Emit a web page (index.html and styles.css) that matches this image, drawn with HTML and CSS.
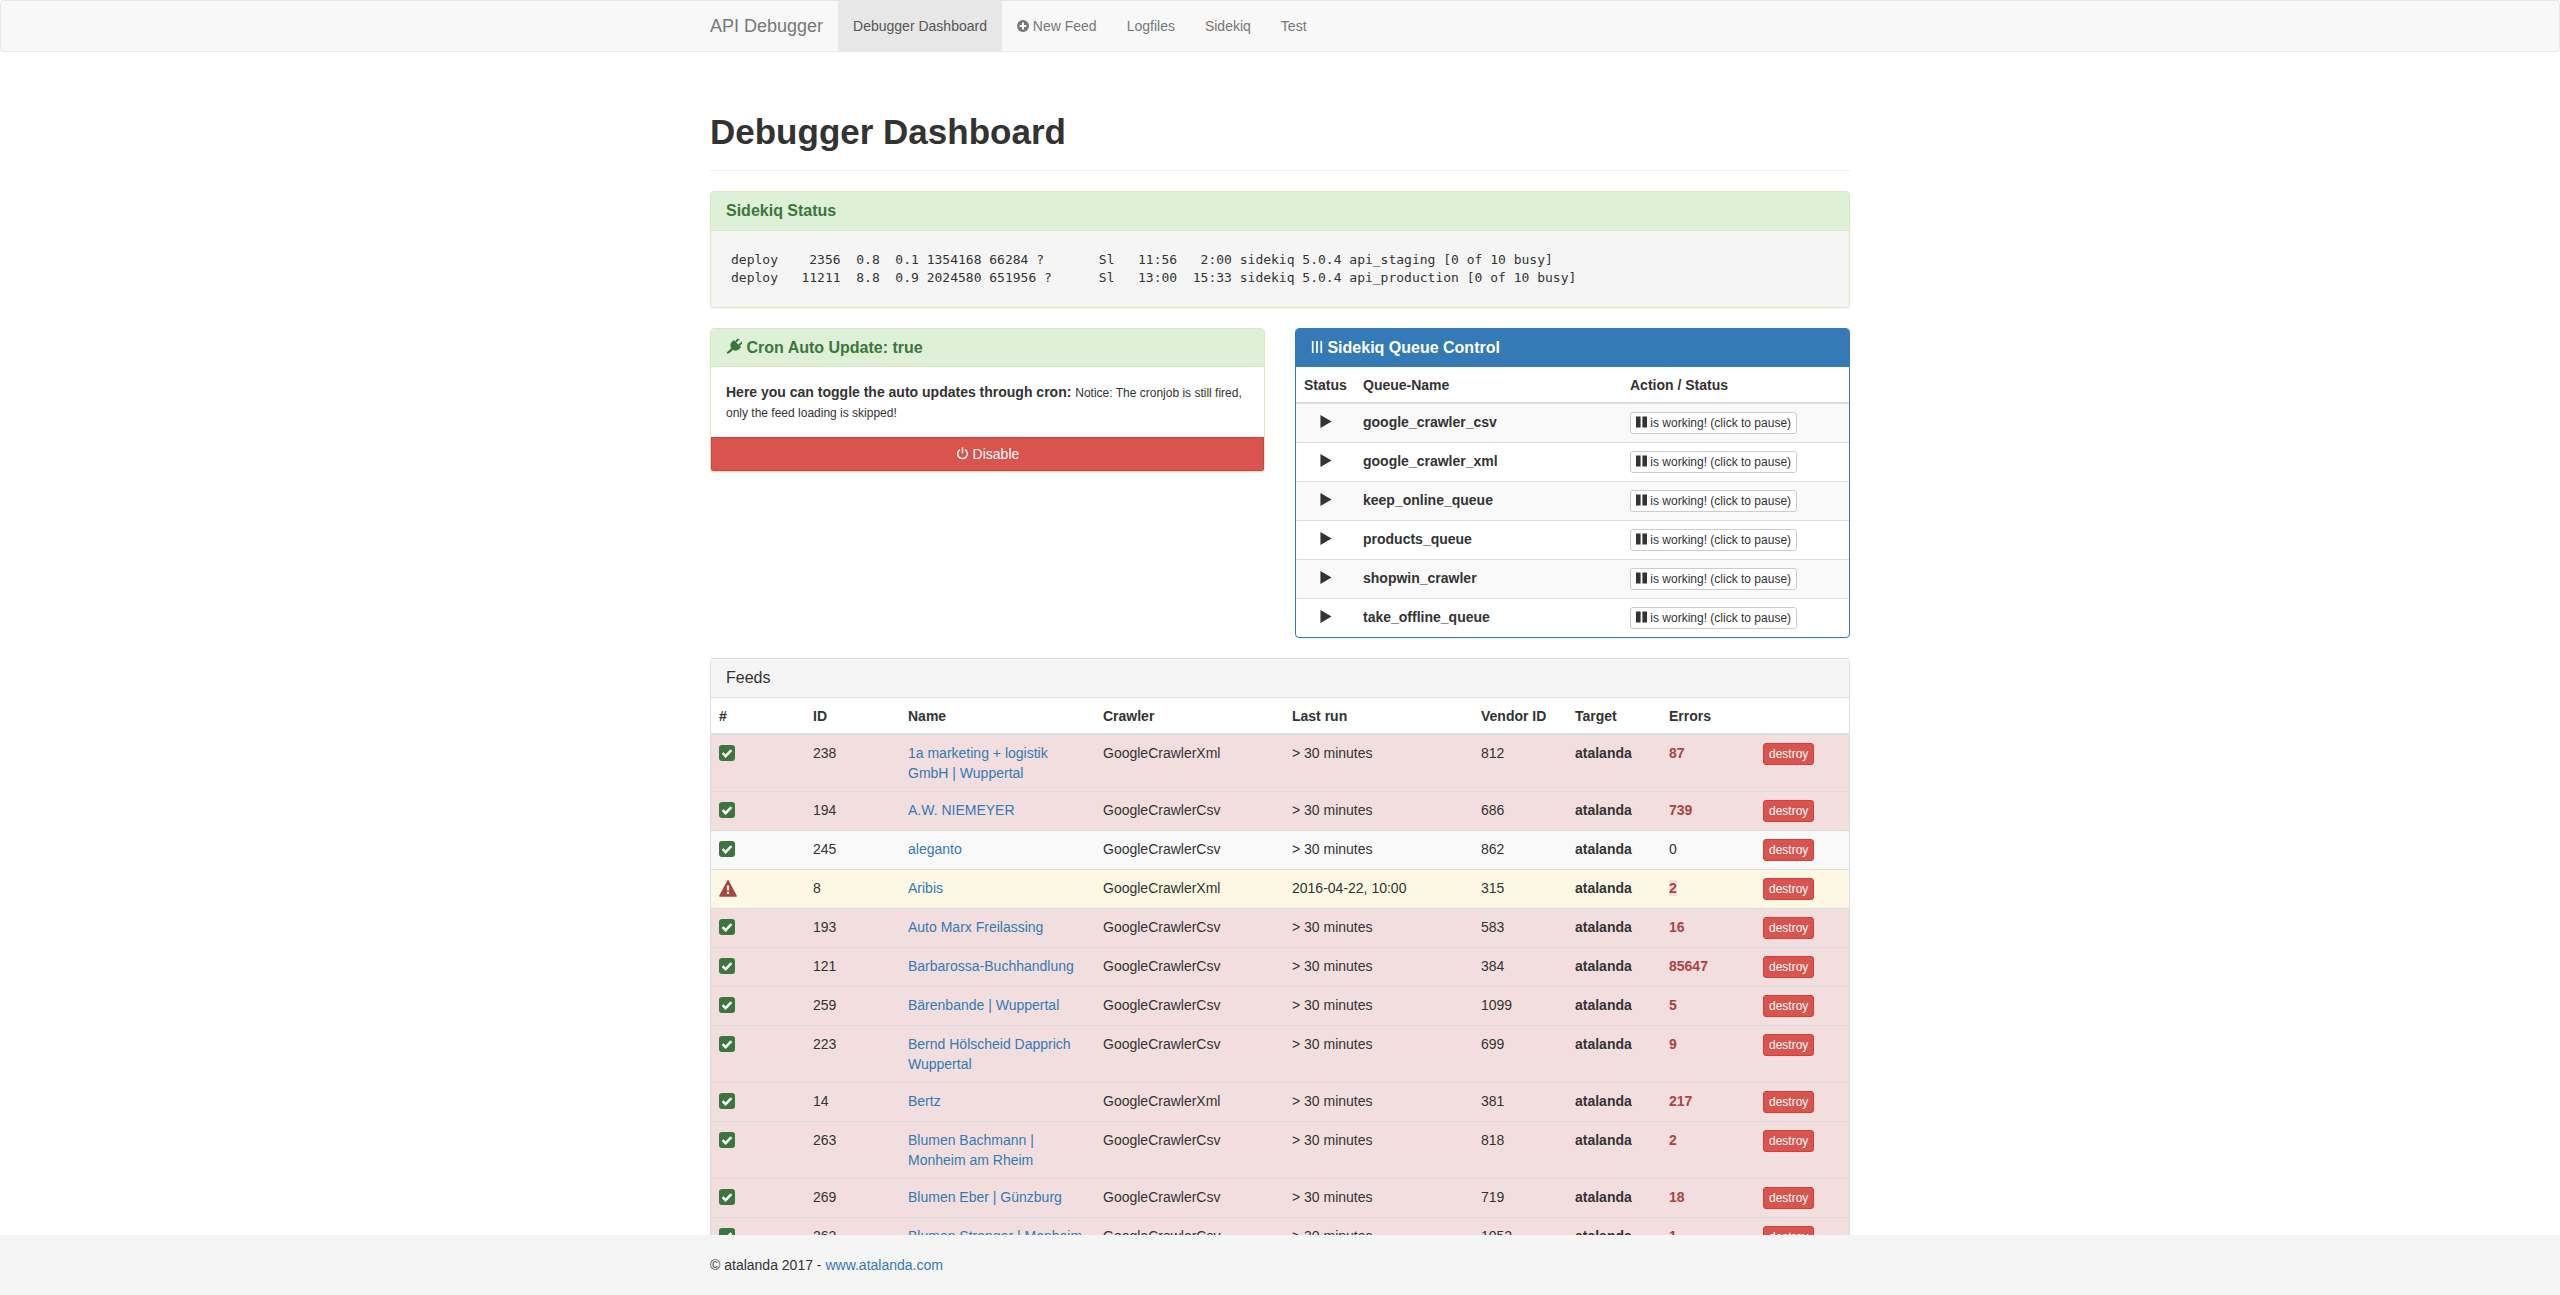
FILE: index.html
```html
<!DOCTYPE html>
<html>
<head>
  <title>API Debugger</title>
  <link rel="stylesheet" href="styles.css">
</head>
<body>
  <nav class="navbar">
    <div class="container nav-inner">
      <a class="brand" href="#">API Debugger</a>
      <a class="nav-link active" href="#">Debugger Dashboard</a>
      <a class="nav-link" href="#"><svg class="icon-plus" viewBox="0 0 12 12"><circle cx="6" cy="6" r="6" fill="#777"/><path d="M6 2.6v6.8M2.6 6h6.8" stroke="#f8f8f8" stroke-width="2"/></svg> New Feed</a>
      <a class="nav-link" href="#">Logfiles</a>
      <a class="nav-link" href="#">Sidekiq</a>
      <a class="nav-link" href="#">Test</a>
    </div>
  </nav>

  <div class="container">
    <div class="page-header"><h1>Debugger Dashboard</h1></div>

    <div class="panel panel-success">
      <div class="panel-heading"><h3 class="panel-title">Sidekiq Status</h3></div>
      <pre class="status-output">deploy    2356  0.8  0.1 1354168 66284 ?       Sl   11:56   2:00 sidekiq 5.0.4 api_staging [0 of 10 busy]
deploy   11211  8.8  0.9 2024580 651956 ?      Sl   13:00  15:33 sidekiq 5.0.4 api_production [0 of 10 busy]</pre>
    </div>

    <div class="row">
      <div class="col">
        <div class="panel panel-success">
          <div class="panel-heading">
            <h3 class="panel-title"><svg class="icon-plug" viewBox="0 0 16 16"><g transform="rotate(45 8 8)" fill="#3c763d"><rect x="4.6" y="-1.6" width="2" height="5" rx=".6"/><rect x="9.4" y="-1.6" width="2" height="5" rx=".6"/><path d="M2.8 3.2h10.4v2.6c0 2.7-1.8 4.6-4 5V13c0 1.6-.4 3-1.2 4.4H6.8V10.8c-2.2-.4-4-2.3-4-5z"/></g></svg> Cron Auto Update: true</h3>
          </div>
          <div class="panel-body">
            <strong>Here you can toggle the auto updates through cron:</strong> <small>Notice: The cronjob is still fired, only the feed loading is skipped!</small>
          </div>
          <a class="btn btn-danger btn-block" href="#"><svg class="icon-power" viewBox="0 0 14 14"><path d="M4.2 2.9a5.2 5.2 0 1 0 5.6 0" fill="none" stroke="#fff" stroke-width="1.6"/><path d="M7 .6v6" stroke="#fff" stroke-width="1.6"/></svg> Disable</a>
        </div>
      </div>

      <div class="col">
        <div class="panel panel-primary">
          <div class="panel-heading">
            <h3 class="panel-title"><svg class="icon-bars" viewBox="0 0 14 16"><path d="M1 1h2v14H1zM6 1h2v14H6zM11 1h2v14h-2z" fill="#fff"/></svg> Sidekiq Queue Control</h3>
          </div>
          <table class="table queue-table">
            <colgroup><col class="q-status"><col class="q-name"><col class="q-action"></colgroup>
            <thead>
              <tr><th>Status</th><th>Queue-Name</th><th>Action / Status</th></tr>
            </thead>
            <tbody>
              <tr>
                <td class="center"><svg class="icon-play" viewBox="0 0 12 14"><path d="M0 0l12 7-12 7z"/></svg></td>
                <td><strong>google_crawler_csv</strong></td>
                <td><a class="btn btn-default btn-xs" href="#"><svg class="icon-pause" viewBox="0 0 12 12"><path d="M0 0h5v12H0zM7 0h5v12H7z"/></svg> is working! (click to pause)</a></td>
              </tr>
              <tr>
                <td class="center"><svg class="icon-play" viewBox="0 0 12 14"><path d="M0 0l12 7-12 7z"/></svg></td>
                <td><strong>google_crawler_xml</strong></td>
                <td><a class="btn btn-default btn-xs" href="#"><svg class="icon-pause" viewBox="0 0 12 12"><path d="M0 0h5v12H0zM7 0h5v12H7z"/></svg> is working! (click to pause)</a></td>
              </tr>
              <tr>
                <td class="center"><svg class="icon-play" viewBox="0 0 12 14"><path d="M0 0l12 7-12 7z"/></svg></td>
                <td><strong>keep_online_queue</strong></td>
                <td><a class="btn btn-default btn-xs" href="#"><svg class="icon-pause" viewBox="0 0 12 12"><path d="M0 0h5v12H0zM7 0h5v12H7z"/></svg> is working! (click to pause)</a></td>
              </tr>
              <tr>
                <td class="center"><svg class="icon-play" viewBox="0 0 12 14"><path d="M0 0l12 7-12 7z"/></svg></td>
                <td><strong>products_queue</strong></td>
                <td><a class="btn btn-default btn-xs" href="#"><svg class="icon-pause" viewBox="0 0 12 12"><path d="M0 0h5v12H0zM7 0h5v12H7z"/></svg> is working! (click to pause)</a></td>
              </tr>
              <tr>
                <td class="center"><svg class="icon-play" viewBox="0 0 12 14"><path d="M0 0l12 7-12 7z"/></svg></td>
                <td><strong>shopwin_crawler</strong></td>
                <td><a class="btn btn-default btn-xs" href="#"><svg class="icon-pause" viewBox="0 0 12 12"><path d="M0 0h5v12H0zM7 0h5v12H7z"/></svg> is working! (click to pause)</a></td>
              </tr>
              <tr>
                <td class="center"><svg class="icon-play" viewBox="0 0 12 14"><path d="M0 0l12 7-12 7z"/></svg></td>
                <td><strong>take_offline_queue</strong></td>
                <td><a class="btn btn-default btn-xs" href="#"><svg class="icon-pause" viewBox="0 0 12 12"><path d="M0 0h5v12H0zM7 0h5v12H7z"/></svg> is working! (click to pause)</a></td>
              </tr>
            </tbody>
          </table>
        </div>
      </div>
    </div>

    <div class="panel panel-default">
      <div class="panel-heading"><h3 class="panel-title feeds-title">Feeds</h3></div>
      <table class="table feeds-table">
        <colgroup><col class="f-1"><col class="f-2"><col class="f-name"><col class="f-wide"><col class="f-wide"><col class="f-1"><col class="f-1"><col class="f-1"><col class="f-1"></colgroup>
        <thead>
          <tr><th>#</th><th>ID</th><th>Name</th><th>Crawler</th><th>Last run</th><th>Vendor ID</th><th>Target</th><th>Errors</th><th></th></tr>
        </thead>
        <tbody>
          <tr class="danger">
            <td><svg class="icon-check" viewBox="0 0 16 16"><rect width="16" height="16" rx="3" fill="#3c763d"/><path d="M3.6 8.2l3 3 5.8-6" fill="none" stroke="#fff" stroke-width="2.4"/></svg></td>
            <td>238</td><td><a href="#">1a marketing + logistik GmbH | Wuppertal</a></td><td>GoogleCrawlerXml</td><td>&gt; 30 minutes</td><td>812</td><td><strong>atalanda</strong></td><td><span class="errors">87</span></td><td><a class="btn btn-danger btn-xs" href="#">destroy</a></td>
          </tr>
          <tr class="danger">
            <td><svg class="icon-check" viewBox="0 0 16 16"><rect width="16" height="16" rx="3" fill="#3c763d"/><path d="M3.6 8.2l3 3 5.8-6" fill="none" stroke="#fff" stroke-width="2.4"/></svg></td>
            <td>194</td><td><a href="#">A.W. NIEMEYER</a></td><td>GoogleCrawlerCsv</td><td>&gt; 30 minutes</td><td>686</td><td><strong>atalanda</strong></td><td><span class="errors">739</span></td><td><a class="btn btn-danger btn-xs" href="#">destroy</a></td>
          </tr>
          <tr class="striped">
            <td><svg class="icon-check" viewBox="0 0 16 16"><rect width="16" height="16" rx="3" fill="#3c763d"/><path d="M3.6 8.2l3 3 5.8-6" fill="none" stroke="#fff" stroke-width="2.4"/></svg></td>
            <td>245</td><td><a href="#">aleganto</a></td><td>GoogleCrawlerCsv</td><td>&gt; 30 minutes</td><td>862</td><td><strong>atalanda</strong></td><td>0</td><td><a class="btn btn-danger btn-xs" href="#">destroy</a></td>
          </tr>
          <tr class="warning">
            <td><svg class="icon-warn" viewBox="0 0 18 17"><path d="M9 1L17 16H1z" fill="#a94442" stroke="#a94442" stroke-width="1.6" stroke-linejoin="round"/><path d="M9 5.4v5.2M9 11.8v2.2" stroke="#fcf8e3" stroke-width="2.2"/></svg></td>
            <td>8</td><td><a href="#">Aribis</a></td><td>GoogleCrawlerXml</td><td>2016-04-22, 10:00</td><td>315</td><td><strong>atalanda</strong></td><td><span class="errors">2</span></td><td><a class="btn btn-danger btn-xs" href="#">destroy</a></td>
          </tr>
          <tr class="danger">
            <td><svg class="icon-check" viewBox="0 0 16 16"><rect width="16" height="16" rx="3" fill="#3c763d"/><path d="M3.6 8.2l3 3 5.8-6" fill="none" stroke="#fff" stroke-width="2.4"/></svg></td>
            <td>193</td><td><a href="#">Auto Marx Freilassing</a></td><td>GoogleCrawlerCsv</td><td>&gt; 30 minutes</td><td>583</td><td><strong>atalanda</strong></td><td><span class="errors">16</span></td><td><a class="btn btn-danger btn-xs" href="#">destroy</a></td>
          </tr>
          <tr class="danger">
            <td><svg class="icon-check" viewBox="0 0 16 16"><rect width="16" height="16" rx="3" fill="#3c763d"/><path d="M3.6 8.2l3 3 5.8-6" fill="none" stroke="#fff" stroke-width="2.4"/></svg></td>
            <td>121</td><td><a href="#">Barbarossa-Buchhandlung</a></td><td>GoogleCrawlerCsv</td><td>&gt; 30 minutes</td><td>384</td><td><strong>atalanda</strong></td><td><span class="errors">85647</span></td><td><a class="btn btn-danger btn-xs" href="#">destroy</a></td>
          </tr>
          <tr class="danger">
            <td><svg class="icon-check" viewBox="0 0 16 16"><rect width="16" height="16" rx="3" fill="#3c763d"/><path d="M3.6 8.2l3 3 5.8-6" fill="none" stroke="#fff" stroke-width="2.4"/></svg></td>
            <td>259</td><td><a href="#">Bärenbande | Wuppertal</a></td><td>GoogleCrawlerCsv</td><td>&gt; 30 minutes</td><td>1099</td><td><strong>atalanda</strong></td><td><span class="errors">5</span></td><td><a class="btn btn-danger btn-xs" href="#">destroy</a></td>
          </tr>
          <tr class="danger">
            <td><svg class="icon-check" viewBox="0 0 16 16"><rect width="16" height="16" rx="3" fill="#3c763d"/><path d="M3.6 8.2l3 3 5.8-6" fill="none" stroke="#fff" stroke-width="2.4"/></svg></td>
            <td>223</td><td><a href="#">Bernd Hölscheid Dapprich Wuppertal</a></td><td>GoogleCrawlerCsv</td><td>&gt; 30 minutes</td><td>699</td><td><strong>atalanda</strong></td><td><span class="errors">9</span></td><td><a class="btn btn-danger btn-xs" href="#">destroy</a></td>
          </tr>
          <tr class="danger">
            <td><svg class="icon-check" viewBox="0 0 16 16"><rect width="16" height="16" rx="3" fill="#3c763d"/><path d="M3.6 8.2l3 3 5.8-6" fill="none" stroke="#fff" stroke-width="2.4"/></svg></td>
            <td>14</td><td><a href="#">Bertz</a></td><td>GoogleCrawlerXml</td><td>&gt; 30 minutes</td><td>381</td><td><strong>atalanda</strong></td><td><span class="errors">217</span></td><td><a class="btn btn-danger btn-xs" href="#">destroy</a></td>
          </tr>
          <tr class="danger">
            <td><svg class="icon-check" viewBox="0 0 16 16"><rect width="16" height="16" rx="3" fill="#3c763d"/><path d="M3.6 8.2l3 3 5.8-6" fill="none" stroke="#fff" stroke-width="2.4"/></svg></td>
            <td>263</td><td><a href="#">Blumen Bachmann | Monheim am Rheim</a></td><td>GoogleCrawlerCsv</td><td>&gt; 30 minutes</td><td>818</td><td><strong>atalanda</strong></td><td><span class="errors">2</span></td><td><a class="btn btn-danger btn-xs" href="#">destroy</a></td>
          </tr>
          <tr class="danger">
            <td><svg class="icon-check" viewBox="0 0 16 16"><rect width="16" height="16" rx="3" fill="#3c763d"/><path d="M3.6 8.2l3 3 5.8-6" fill="none" stroke="#fff" stroke-width="2.4"/></svg></td>
            <td>269</td><td><a href="#">Blumen Eber | Günzburg</a></td><td>GoogleCrawlerCsv</td><td>&gt; 30 minutes</td><td>719</td><td><strong>atalanda</strong></td><td><span class="errors">18</span></td><td><a class="btn btn-danger btn-xs" href="#">destroy</a></td>
          </tr>
          <tr class="danger">
            <td><svg class="icon-check" viewBox="0 0 16 16"><rect width="16" height="16" rx="3" fill="#3c763d"/><path d="M3.6 8.2l3 3 5.8-6" fill="none" stroke="#fff" stroke-width="2.4"/></svg></td>
            <td>262</td><td><a href="#">Blumen Stranger | Monheim am Rhein</a></td><td>GoogleCrawlerCsv</td><td>&gt; 30 minutes</td><td>1052</td><td><strong>atalanda</strong></td><td><span class="errors">1</span></td><td><a class="btn btn-danger btn-xs" href="#">destroy</a></td>
          </tr>
        </tbody>
      </table>
    </div>
  </div>

  <footer class="footer">
    <div class="container">© atalanda 2017 - <a href="#">www.atalanda.com</a></div>
  </footer>
</body>
</html>
```

FILE: styles.css
```css
html, body {
  height: 100%;
  overflow: hidden;
}

body {
  margin: 0;
  font-family: "Liberation Sans", Arial, sans-serif;
  font-size: 14px;
  line-height: 20px;
  color: #333;
  background-color: #fff;
}

a {
  color: #337ab7;
  text-decoration: none;
}

.container {
  width: 1140px;
  margin: 0 auto;
}

/* Navbar */
.navbar {
  height: 50px;
  background-color: #f8f8f8;
  border: 1px solid #e7e7e7;
  border-radius: 4px;
}

.nav-inner {
  display: flex;
}

.brand {
  margin-left: -15px;
  padding: 15px;
  font-size: 18px;
  color: #777;
}

.nav-link {
  padding: 15px;
  color: #777;
}

.nav-link.active {
  color: #555;
  background-color: #e7e7e7;
}

.icon-plus {
  width: 12px;
  height: 12px;
  vertical-align: -1px;
}

/* Header */
.page-header {
  margin: 60px 0 20px;
  padding-bottom: 9px;
  border-bottom: 1px solid #eee;
}

h1 {
  margin: 0 0 10px;
  font-size: 35px;
  line-height: 39px;
  font-weight: bold;
}

/* Panels */
.panel {
  margin-bottom: 20px;
  background-color: #fff;
  border: 1px solid #ddd;
  border-radius: 4px;
  box-shadow: 0 1px 1px rgba(0, 0, 0, .05);
  overflow: hidden;
}

.panel-heading {
  padding: 10px 15px;
  border-bottom: 1px solid #ddd;
}

.panel-title {
  margin: 0;
  font-size: 16px;
  line-height: 17.6px;
  font-weight: bold;
}

.feeds-title {
  font-weight: normal;
}

.panel-body {
  padding: 15px;
}

.panel-default .panel-heading {
  background-color: #f5f5f5;
}

.panel-success {
  border-color: #d6e9c6;
}

.panel-success .panel-heading {
  color: #3c763d;
  background-color: #dff0d8;
  border-color: #d6e9c6;
}

.panel-primary {
  border-color: #337ab7;
}

.panel-primary .panel-heading {
  color: #fff;
  background-color: #337ab7;
  border-color: #337ab7;
}

.status-output {
  margin: 0;
  padding: 20px;
  font-family: "DejaVu Sans Mono", monospace;
  font-size: 13px;
  line-height: 18px;
  background-color: #f5f5f5;
}

small {
  font-size: 12px;
  line-height: 1;
}

/* Two columns */
.row {
  display: flex;
  gap: 30px;
  align-items: flex-start;
}

.col {
  flex: 1;
  min-width: 0;
}

/* Buttons */
.btn {
  display: inline-block;
  border: 1px solid transparent;
  text-align: center;
  vertical-align: top;
}

.btn-block {
  display: block;
  padding: 6px 12px;
  border-radius: 0;
}

.btn-xs {
  padding: 1px 5px;
  font-size: 12px;
  line-height: 18px;
  border-radius: 3px;
}

.btn-danger {
  color: #fff;
  background-color: #d9534f;
  border-color: #d43f3a;
}

.btn-default {
  color: #333;
  background-color: #fff;
  border-color: #ccc;
}

/* Tables */
.table {
  width: 100%;
  border-collapse: collapse;
  table-layout: fixed;
}

.table th,
.table td {
  padding: 8px;
  text-align: left;
  vertical-align: top;
  border-top: 1px solid #ddd;
}

.table th {
  padding-bottom: 7px;
  vertical-align: bottom;
  border-top: 0;
  border-bottom: 2px solid #ddd;
}

.table td.center {
  text-align: center;
}

.queue-table tbody tr:nth-child(odd),
.striped {
  background-color: #f9f9f9;
}

.danger {
  background-color: #f2dede;
}

.warning {
  background-color: #fcf8e3;
}

.q-status { width: 59px; }
.q-name { width: 267px; }

.f-1 { width: 94px; }
.f-2 { width: 95px; }
.f-name { width: 195px; }
.f-wide { width: 189px; }

.errors {
  font-weight: bold;
  color: #a94442;
  background-color: #f2dede;
}

/* Icons */
.icon-plug {
  width: 16px;
  height: 16px;
  vertical-align: -2px;
}

.icon-bars {
  width: 12px;
  height: 14px;
  vertical-align: -1px;
}

.icon-power {
  width: 13px;
  height: 13px;
  vertical-align: -1px;
}

.icon-play {
  width: 12px;
  height: 13px;
  fill: #333;
  vertical-align: -1px;
}

.icon-pause {
  width: 11px;
  height: 12px;
  fill: #333;
  vertical-align: -1px;
}

.icon-check {
  display: block;
  width: 16px;
  height: 16px;
  margin-top: 2px;
}

.icon-warn {
  display: block;
  width: 18px;
  height: 17px;
  margin-top: 2px;
}

/* Footer lies over the table */
.footer {
  position: fixed;
  left: 0;
  right: 0;
  bottom: 0;
  height: 60px;
  line-height: 60px;
  background-color: #f5f5f5;
}
```
